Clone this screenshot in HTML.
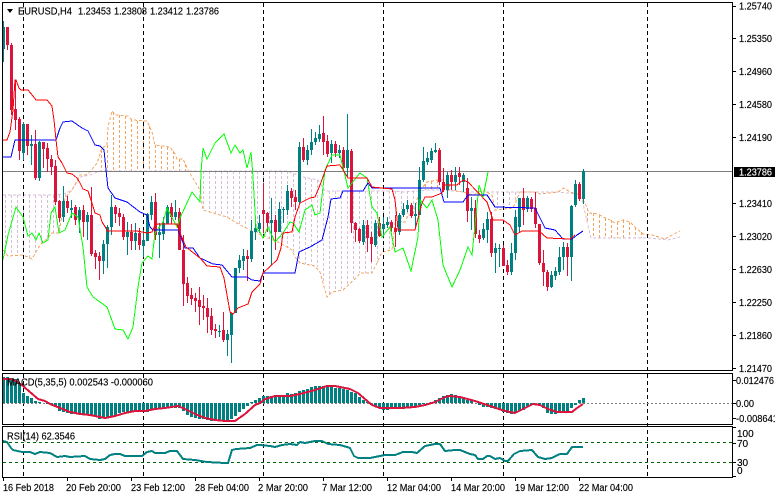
<!DOCTYPE html>
<html><head><meta charset="utf-8"><title>EURUSD,H4</title>
<style>
html,body{margin:0;padding:0;background:#fff;width:775px;height:498px;overflow:hidden}
svg{display:block}
text{font-family:"Liberation Sans",sans-serif;font-size:10px;fill:#000;stroke:#000;stroke-width:.15}
polyline,path{shape-rendering:crispEdges}
</style></head><body>
<svg width="775" height="498" viewBox="0 0 775 498" xmlns="http://www.w3.org/2000/svg">
<rect width="775" height="498" fill="#fff"/>

<!-- cloud hatching -->
<path fill="none" stroke="#d8bfd8" stroke-width="1" stroke-dasharray="3 2" d="M5.5 195V253M11.5 195V256M17.5 195V255M23.5 195V255M29.5 195V258M35.5 195V253M41.5 195V244M47.5 195V239M53.5 195V233M59.5 195V233M65.5 194V198M203.5 171V210M209.5 171V212M215.5 171V213M221.5 171V215M227.5 171V217M233.5 171V221M239.5 171V225M245.5 171V228M251.5 171V231M257.5 171V233M263.5 171V235M269.5 171V238M275.5 171V241M281.5 171V243M287.5 171V248M293.5 174V253M299.5 176V262M305.5 177V264M311.5 179V265M317.5 180V267M323.5 188V283M329.5 191V295M335.5 191V291M341.5 191V290M347.5 191V286M353.5 191V281M359.5 191V273M365.5 191V273M371.5 191V273M377.5 191V263M383.5 191V252M389.5 191V250M395.5 191V223M401.5 191V222M407.5 191V218M413.5 191V215M419.5 190V195M497.5 192V209M503.5 192V209M509.5 192V208M515.5 192V200"/>
<path fill="none" stroke="#f4a460" stroke-width="1" stroke-dasharray="3 2" d="M101.5 150V171M107.5 145V171M113.5 112V171M119.5 115V171M125.5 116V171M131.5 119V171M137.5 121V171M143.5 121V171M149.5 126V171M155.5 145V171M161.5 146V171M167.5 147V171M173.5 151V171M179.5 159V171M185.5 164V171M425.5 184V190M431.5 181V190M437.5 180V190M443.5 180V190M449.5 184V190M587.5 208V222M593.5 213V238M599.5 215V238M605.5 218V238M611.5 220V238M617.5 222V238M623.5 220V238M629.5 222V238M635.5 227V238M641.5 232V238"/>

<!-- span A / span B -->
<polyline fill="none" stroke="#d8bfd8" stroke-dasharray="3 2" points="3,195 57,195 66,193 72,190 80,177 90,175 100,171 190,171 287,171 303,177 318,180 325,191 392,191 405,192 427,190 442,190 463,192 493,192 515,192 558,192 578,194 583,203 587,222 591,238 648,238 668,240 680,237"/>
<polyline fill="none" stroke="#f4a460" stroke-dasharray="3 2" points="3,250 8,256 23,255 32,259 40,245 48,238 52,233 59,233 65,198 72,190 80,175 85,175 90,172 97,163 102,148 107,145 108,127 112,111 115,115 128,116 132,120 147,121 152,132 155,145 170,147 175,154 177,159 183,159 188,170 200,190 203,210 213,213 227,217 240,225 252,231 280,243 292,250 295,257 300,263 315,266 320,272 323,283 327,297 332,292 343,290 357,277 360,273 372,273 377,263 382,252 392,250 395,223 405,222 408,215 413,215 417,200 420,190 427,182 437,180 447,180 452,190 463,192 473,195 483,190 492,195 495,210 513,208 520,192 535,192 540,194 558,192 564,188 570,192 578,194 585,203 589,213 598,214 603,217 610,220 615,223 623,220 630,222 635,227 643,234 652,235 665,239 672,235 680,231"/>

<!-- vertical grid -->
<path stroke="#000" stroke-width="1" stroke-dasharray="4 3" fill="none" d="M23.5 3V477M143.5 3V477M263.5 3V477M383.5 3V477M503.5 3V477M647.5 3V477"/>

<!-- price line -->
<path stroke="#808080" stroke-width="1" d="M3 171.5H732"/>

<!-- candles wicks -->
<path fill="none" stroke="#008080" stroke-width="1" d="M3.5 21V62M23.5 122V160M31.5 135V165M39.5 141V181M63.5 186V222M71.5 200V218M79.5 207V233M87.5 212V240M103.5 240V274M107.5 225V268M111.5 195V235M127.5 222V255M135.5 223V250M143.5 230V257M147.5 213V241M151.5 196V220M159.5 223V258M163.5 217V240M167.5 205V224M175.5 200V220M219.5 325V337M227.5 330V356M231.5 313V363M235.5 268V313M239.5 255V273M243.5 249V270M251.5 220V262M255.5 222V240M259.5 215V233M271.5 198V265M279.5 202V232M283.5 207V223M287.5 185V215M299.5 142V205M307.5 145V165M311.5 129V155M315.5 132V145M319.5 125V142M331.5 140V163M339.5 145V158M347.5 114V177M363.5 220V245M375.5 220V247M383.5 217V237M387.5 217V228M399.5 213V235M403.5 203V217M407.5 200V212M415.5 203V228M419.5 167V215M423.5 147V182M427.5 152V165M431.5 148V163M435.5 143V153M447.5 172V198M455.5 167V190M463.5 173V192M471.5 197V230M483.5 223V240M487.5 212V243M495.5 243V273M499.5 244V267M511.5 243V275M515.5 210V260M519.5 198V232M527.5 196V212M551.5 271V288M555.5 267V280M559.5 247V275M563.5 242V270M571.5 205V281M575.5 180V207M583.5 169V204"/>
<path fill="none" stroke="#dc143c" stroke-width="1" d="M7.5 27V50M11.5 43V115M15.5 80V130M19.5 117V160M27.5 124V155M35.5 130V180M43.5 142V168M47.5 143V172M51.5 155V175M55.5 160V205M59.5 200V222M67.5 196V213M75.5 205V225M83.5 205V237M91.5 187V256M95.5 250V269M99.5 252V280M115.5 205V223M119.5 208V226M123.5 214V240M131.5 224V250M139.5 228V250M155.5 193V240M171.5 203V224M179.5 208V250M183.5 235V306M187.5 277V303M191.5 288V305M195.5 293V312M199.5 287V325M203.5 295V320M207.5 298V333M211.5 308V335M215.5 324V338M223.5 312V342M247.5 250V281M263.5 183V233M267.5 212V232M275.5 215V250M291.5 188V207M295.5 190V210M303.5 138V162M323.5 116V155M327.5 135V157M335.5 141V157M343.5 147V170M351.5 149V233M355.5 222V242M359.5 228V243M367.5 220V252M371.5 232V262M379.5 217V237M391.5 220V232M395.5 215V247M411.5 203V218M439.5 148V185M443.5 168V192M451.5 170V190M459.5 167V185M467.5 178V222M475.5 200V238M479.5 230V243M491.5 212V257M503.5 245V266M507.5 260V275M523.5 188V225M531.5 197V212M535.5 192V228M539.5 224V265M543.5 250V286M547.5 270V291M567.5 243V276M579.5 182V201"/>
<!-- candle bodies -->
<path fill="none" stroke="#008080" stroke-width="3" d="M3.5 27V49M23.5 124V153M31.5 144V146M39.5 142V178M63.5 201V217M71.5 208V210M79.5 210V220M87.5 215V222M103.5 244V261M107.5 227V244M111.5 207V227M127.5 232V237M135.5 233V241M143.5 240V246M147.5 214V241M151.5 202V215M159.5 232V235M163.5 223V234M167.5 207V224M175.5 212V217M219.5 331V332M227.5 334V340M231.5 313V335M235.5 268V313M239.5 260V268M243.5 256V261M251.5 231V259M255.5 228V232M259.5 223V229M271.5 220V223M279.5 209V232M283.5 209V210M287.5 191V210M299.5 147V202M307.5 150V160M311.5 142V150M315.5 138V142M319.5 134V139M331.5 144V153M339.5 150V153M347.5 150V168M363.5 225V242M375.5 223V245M383.5 224V229M387.5 222V225M399.5 215V232M403.5 209V215M407.5 205V209M415.5 214V216M419.5 180V215M423.5 161V180M427.5 158V162M431.5 151V160M435.5 150V152M447.5 175V190M455.5 175V182M463.5 175V182M471.5 208V211M483.5 229V238M487.5 219V230M495.5 248V253M499.5 248V249M511.5 253V272M515.5 217V253M519.5 198V227M527.5 198V209M551.5 275V287M555.5 271V276M559.5 257V272M563.5 247V257M571.5 206V257M575.5 184V205M583.5 171V199"/>
<path fill="none" stroke="#dc143c" stroke-width="3" d="M7.5 27V45M11.5 45V110M15.5 109V120M19.5 119V151M27.5 124V146M35.5 144V178M43.5 142V149M47.5 148V159M51.5 159V167M55.5 166V202M59.5 201V218M67.5 201V208M75.5 207V220M83.5 210V222M91.5 215V254M95.5 253V257M99.5 256V261M115.5 207V214M119.5 213V217M123.5 217V237M131.5 232V241M139.5 233V245M155.5 202V235M171.5 207V217M179.5 212V250M183.5 250V284M187.5 283V296M191.5 295V299M195.5 298V301M199.5 300V307M203.5 306V308M207.5 308V317M211.5 316V330M215.5 329V331M223.5 330V340M247.5 256V259M263.5 210V214M267.5 213V223M275.5 220V232M291.5 191V198M295.5 197V202M303.5 147V160M323.5 133V142M327.5 141V154M335.5 144V153M343.5 150V168M351.5 151V223M355.5 223V230M359.5 229V241M367.5 225V238M371.5 237V244M379.5 223V236M391.5 222V228M395.5 228V232M411.5 205V216M439.5 150V182M443.5 182V190M451.5 175V182M459.5 173V177M467.5 188V211M475.5 208V234M479.5 235V239M491.5 219V253M503.5 248V266M507.5 265V272M523.5 198V210M531.5 199V209M535.5 208V224M539.5 224V263M543.5 263V272M547.5 272V287M567.5 247V257M579.5 184V199"/>

<!-- chikou span -->
<polyline fill="none" stroke="#00ff00" stroke-width="1" points="3,260 8,235 16,207 23,217 28,236 32,233 36,240 39,233 43,243 48,240 51,213 55,207 59,233 65,230 72,213 78,217 83,247 87,287 93,297 100,302 107,307 115,329 123,330 128,339 133,327 138,287 142,263 148,256 152,259 155,233 163,222 167,208 177,227 180,218 192,192 200,202 201,172 203,148 207,159 215,143 224,134 231,153 235,145 240,153 243,150 247,168 251,152 253,177 256,228 260,232 263,238 268,227 275,242 283,233 290,222 293,223 299,232 305,210 312,205 315,215 320,213 325,170 332,155 340,155 348,188 360,173 367,178 372,207 377,213 382,237 390,227 395,252 403,248 411,271 418,237 420,200 427,208 432,200 438,220 443,265 452,287 460,270 468,247 472,255 479,185 483,197 488,172"/>
<!-- kijun -->
<polyline fill="none" stroke="#0000ff" stroke-width="1" points="3,157 11,157 15,140 56,140 60,128 63,122 72,121 82,128 88,131 95,145 100,146 104,150 106,170 108,188 115,198 127,202 140,212 147,215 150,227 153,230 178,230 182,240 185,248 193,248 200,258 213,264 222,265 232,277 247,277 252,280 260,281 263,273 295,273 299,252 310,247 322,240 328,217 331,199 340,198 343,191 363,191 368,183 372,188 440,188 444,202 463,202 468,195 487,195 495,207 535,208 545,228 555,230 563,239 572,239 577,235 583,231"/>
<!-- tenkan -->
<polyline fill="none" stroke="#ff0000" stroke-width="1" points="3,140 7,140 10,132 13,110 15,80 16,80 19,88 21,90 28,90 33,96 36,100 47,100 52,106 54,120 56,140 58,157 62,163 67,173 72,174 77,178 80,183 83,189 88,191 92,203 95,213 100,215 102,222 106,228 107,231 137,231 147,233 152,232 155,225 158,224 177,224 180,233 183,240 186,247 200,258 207,266 220,267 224,278 227,295 230,312 233,314 238,308 248,304 252,292 260,284 263,273 277,260 281,248 283,233 292,232 295,217 300,203 310,198 315,197 320,185 327,166 340,165 348,178 367,178 372,187 392,189 395,200 397,218 398,230 415,230 422,203 425,197 432,197 442,193 444,185 457,185 463,180 468,182 487,202 493,220 503,220 510,225 515,235 522,231 539,231 547,238 570,239 575,235"/>

<!-- MACD -->
<path stroke="#808080" stroke-dasharray="2 2" d="M3 403.5H732"/>
<path fill="none" stroke="#008080" stroke-width="3" d="M3.5 403V377M7.5 403V377M11.5 403V378M15.5 403V379M19.5 403V383M23.5 403V393M27.5 403V396M31.5 403V398M35.5 403V401M39.5 403V402M47.5 403V404M51.5 403V404M55.5 403V407M59.5 403V411M63.5 403V412M67.5 403V413M71.5 403V414M75.5 403V414M79.5 403V414M83.5 403V414M87.5 403V414M91.5 403V416M95.5 403V417M99.5 403V419M103.5 403V418M107.5 403V417M111.5 403V416M115.5 403V415M119.5 403V413M123.5 403V412M127.5 403V412M131.5 403V412M135.5 403V412M139.5 403V412M143.5 403V412M147.5 403V412M151.5 403V410M155.5 403V410M159.5 403V409M163.5 403V408M167.5 403V408M171.5 403V408M175.5 403V408M179.5 403V408M183.5 403V411M187.5 403V415M191.5 403V417M195.5 403V418M199.5 403V419M203.5 403V419M207.5 403V420M211.5 403V421M215.5 403V421M219.5 403V421M223.5 403V421M227.5 403V421M231.5 403V419M235.5 403V416M239.5 403V412M243.5 403V409M247.5 403V406M251.5 403V402M255.5 403V400M259.5 403V398M263.5 403V396M267.5 403V396M271.5 403V396M275.5 403V396M279.5 403V396M283.5 403V396M287.5 403V393M291.5 403V394M295.5 403V393M299.5 403V391M303.5 403V390M307.5 403V389M311.5 403V387M315.5 403V386M319.5 403V386M323.5 403V386M327.5 403V386M331.5 403V387M335.5 403V388M339.5 403V388M343.5 403V389M347.5 403V390M351.5 403V392M355.5 403V393M359.5 403V397M363.5 403V400M367.5 403V402M375.5 403V407M379.5 403V408M383.5 403V410M387.5 403V410M391.5 403V409M395.5 403V409M399.5 403V409M403.5 403V409M407.5 403V408M411.5 403V408M415.5 403V406M419.5 403V405M423.5 403V404M427.5 403V404M431.5 403V402M435.5 403V400M439.5 403V398M443.5 403V396M447.5 403V395M451.5 403V394M455.5 403V395M459.5 403V397M463.5 403V398M467.5 403V400M471.5 403V401M479.5 403V405M483.5 403V407M487.5 403V407M491.5 403V408M495.5 403V409M499.5 403V410M503.5 403V412M507.5 403V413M511.5 403V414M515.5 403V413M519.5 403V411M523.5 403V410M527.5 403V407M531.5 403V405M539.5 403V405M543.5 403V408M547.5 403V413M551.5 403V414M555.5 403V414M559.5 403V413M563.5 403V413M567.5 403V412M571.5 403V408M575.5 403V405M579.5 403V400M583.5 403V398"/>
<polyline fill="none" stroke="#dc143c" stroke-width="2" points="3,379 10,379 16,381 23,386 30,392 38,399 45,401 50,404 60,408 70,412 80,414 90,415 100,417 105,418 115,416 125,413 135,411 145,411 155,409 165,408 178,406 185,409 195,414 205,418 215,420 225,421 235,421 245,414 255,405 260,403 265,399 275,396 290,396 300,394 315,390 327,386 335,386 350,389 358,393 365,399 372,405 380,408 400,408 415,407 425,405 435,402 445,397 450,396 460,397 475,401 490,406 505,411 515,413 525,408 533,404 540,405 548,409 557,412 572,412 577,408 583,404"/>
<text x="7" y="385.5" textLength="146" lengthAdjust="spacingAndGlyphs">MACD(5,35,5) 0.002543 -0.000060</text>

<!-- RSI -->
<path stroke="#006400" stroke-dasharray="3 3" d="M3 442.5H732M3 462.5H732"/>
<polyline fill="none" stroke="#008080" stroke-width="2" points="3,441 7,442 11,448 13,450 22,452 30,452 35,454 40,452 50,453 57,457 65,456 70,457 85,456 90,459 100,460 105,459 110,455 115,454 120,454 125,456 142,456 147,452 152,451 155,453 165,453 170,451 177,451 183,459 195,460 207,462 225,463 228,463 232,450 236,449 250,448 257,445 260,445 270,446 275,447 282,445 290,444 297,445 300,442 305,443 315,441 322,441 328,444 340,445 347,447 350,448 354,456 358,458 370,458 380,456 385,455 395,455 403,452 412,452 417,453 425,446 435,444 440,444 445,451 455,450 460,450 470,454 475,455 478,459 483,459 487,456 490,456 495,459 500,458 505,461 508,461 514,454 520,451 532,450 538,457 545,459 552,458 560,454 567,454 572,447 583,447"/>
<text x="7" y="439.5" textLength="68" lengthAdjust="spacingAndGlyphs">RSI(14) 62.3546</text>

<!-- frames -->
<g stroke="#000" stroke-width="1" fill="none" shape-rendering="crispEdges">
<rect x="2.5" y="2.5" width="730" height="368"/>
<rect x="2.5" y="373.5" width="730" height="51"/>
<rect x="2.5" y="426.5" width="730" height="51"/>
<path d="M733 6.5h3M733 38.5h3M733 71.5h3M733 104.5h3M733 137.5h3M733 203.5h3M733 236.5h3M733 269.5h3M733 302.5h3M733 335.5h3M733 368.5h3M733 380.5h3M733 403.5h3M733 418.5h3M733 427.5h3M733 443.5h3M733 462.5h3M733 476.5h3M3.5 478v3M67.5 478v3M131.5 478v3M195.5 478v3M259.5 478v3M323.5 478v3M387.5 478v3M451.5 478v3M515.5 478v3M579.5 478v3"/>
</g>

<!-- title -->
<polygon points="7,9 13,9 10,13" fill="#000"/>
<text x="18" y="14.5" textLength="54" lengthAdjust="spacingAndGlyphs">EURUSD,H4</text>
<text x="78" y="14.5" textLength="33" lengthAdjust="spacingAndGlyphs">1.23453</text>
<text x="114" y="14.5" textLength="33" lengthAdjust="spacingAndGlyphs">1.23808</text>
<text x="150" y="14.5" textLength="33" lengthAdjust="spacingAndGlyphs">1.23412</text>
<text x="186" y="14.5" textLength="33" lengthAdjust="spacingAndGlyphs">1.23786</text>

<!-- price axis -->
<g>
<text x="739" y="9.5" textLength="33" lengthAdjust="spacingAndGlyphs">1.25740</text>
<text x="739" y="42" textLength="33" lengthAdjust="spacingAndGlyphs">1.25350</text>
<text x="739" y="75" textLength="33" lengthAdjust="spacingAndGlyphs">1.24960</text>
<text x="739" y="108" textLength="33" lengthAdjust="spacingAndGlyphs">1.24580</text>
<text x="739" y="141" textLength="33" lengthAdjust="spacingAndGlyphs">1.24190</text>
<rect x="734" y="167" width="41" height="10" fill="#000"/>
<text x="739" y="175.5" textLength="33" lengthAdjust="spacingAndGlyphs" style="fill:#fff;stroke:#fff">1.23786</text>
<text x="739" y="207" textLength="33" lengthAdjust="spacingAndGlyphs">1.23410</text>
<text x="739" y="240" textLength="33" lengthAdjust="spacingAndGlyphs">1.23020</text>
<text x="739" y="273" textLength="33" lengthAdjust="spacingAndGlyphs">1.22630</text>
<text x="739" y="306" textLength="33" lengthAdjust="spacingAndGlyphs">1.22250</text>
<text x="739" y="339" textLength="33" lengthAdjust="spacingAndGlyphs">1.21860</text>
<text x="739" y="372" textLength="33" lengthAdjust="spacingAndGlyphs">1.21470</text>
<text x="736" y="384" textLength="38" lengthAdjust="spacingAndGlyphs">0.012476</text>
<text x="736" y="407" textLength="18" lengthAdjust="spacingAndGlyphs">0.00</text>
<text x="736" y="422" textLength="42" lengthAdjust="spacingAndGlyphs">-0.008641</text>
<text x="737" y="437">100</text>
<text x="737" y="447">70</text>
<text x="737" y="466">30</text>
<text x="737" y="474">0</text>
</g>

<!-- time axis -->
<g>
<text x="3" y="491" textLength="51" lengthAdjust="spacingAndGlyphs">16 Feb 2018</text>
<text x="66" y="491" textLength="55" lengthAdjust="spacingAndGlyphs">20 Feb 20:00</text>
<text x="131" y="491" textLength="54" lengthAdjust="spacingAndGlyphs">23 Feb 12:00</text>
<text x="195" y="491" textLength="54" lengthAdjust="spacingAndGlyphs">28 Feb 04:00</text>
<text x="258" y="491" textLength="50" lengthAdjust="spacingAndGlyphs">2 Mar 20:00</text>
<text x="322" y="491" textLength="50" lengthAdjust="spacingAndGlyphs">7 Mar 12:00</text>
<text x="387" y="491" textLength="54" lengthAdjust="spacingAndGlyphs">12 Mar 04:00</text>
<text x="451" y="491" textLength="54" lengthAdjust="spacingAndGlyphs">14 Mar 20:00</text>
<text x="515" y="491" textLength="54" lengthAdjust="spacingAndGlyphs">19 Mar 12:00</text>
<text x="579" y="491" textLength="54" lengthAdjust="spacingAndGlyphs">22 Mar 04:00</text>
</g>
</svg>
</body></html>
